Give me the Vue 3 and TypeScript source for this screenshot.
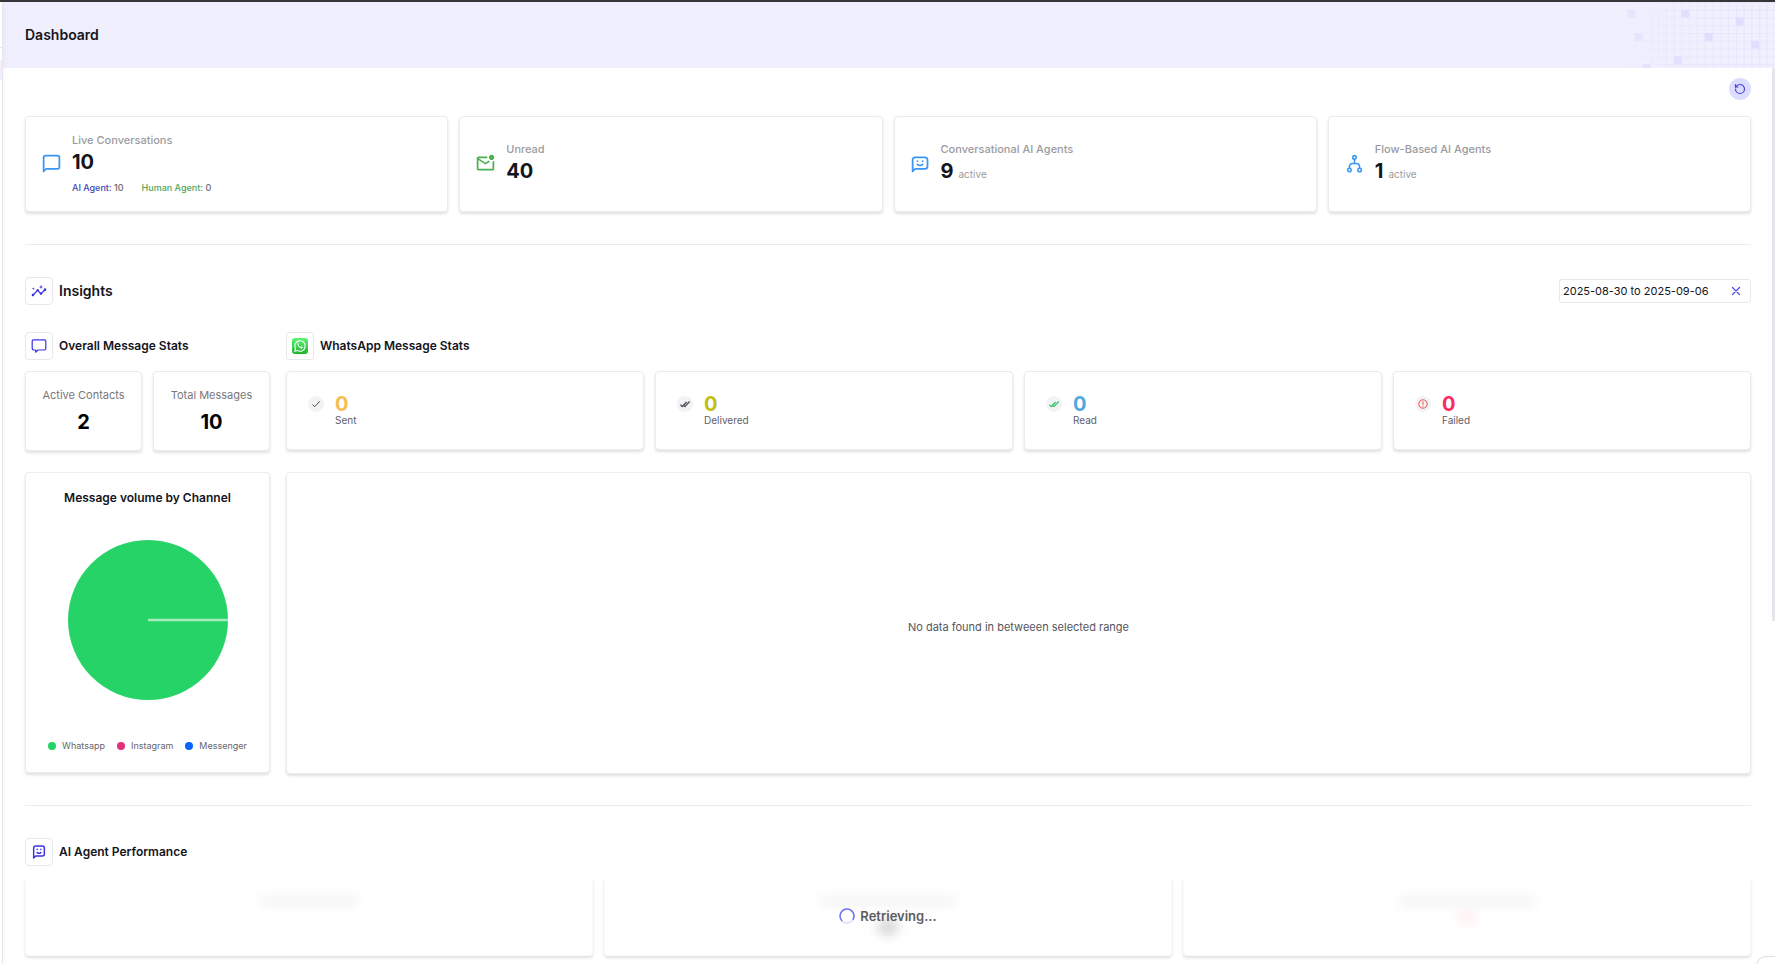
<script setup lang="ts">
import { ref } from 'vue'

interface Summary {
  label: string
  value: number
  icon: 'chat' | 'mail' | 'bot' | 'flow'
  suffix?: string
  split?: { ai: number; human: number }
}

const summaries: Summary[] = [
  { label: 'Live Conversations', value: 10, icon: 'chat', split: { ai: 10, human: 0 } },
  { label: 'Unread', value: 40, icon: 'mail' },
  { label: 'Conversational AI Agents', value: 9, icon: 'bot', suffix: 'active' },
  { label: 'Flow-Based AI Agents', value: 1, icon: 'flow', suffix: 'active' },
]

const totals = [
  { label: 'Active Contacts', value: 2 },
  { label: 'Total Messages', value: 10 },
]

const delivery = [
  { key: 'sent', label: 'Sent', value: 0 },
  { key: 'delivered', label: 'Delivered', value: 0 },
  { key: 'read', label: 'Read', value: 0 },
  { key: 'failed', label: 'Failed', value: 0 },
]

const channels = [
  { key: 'whatsapp', label: 'Whatsapp' },
  { key: 'instagram', label: 'Instagram' },
  { key: 'messenger', label: 'Messenger' },
]

// Column and row of each filled cell in the header grid
const cells = [[1, 1], [8, 1], [15, 2], [2, 4], [11, 4], [17, 5], [7, 7], [3, 8]]

const range = ref('2025-08-30 to 2025-09-06')
</script>

<template>
  <div class="app">
    <aside class="rail"><span class="rail-line"></span><span class="rail-active"></span></aside>
    <div class="shell">
      <header class="header">
        <h1>Dashboard</h1>
        <svg class="grid-art" viewBox="0 0 160 68" aria-hidden="true">
          <defs>
            <pattern id="cells" width="8" height="8" patternUnits="userSpaceOnUse">
              <path d="M8 0H0V8" fill="none" stroke="#dfddfc" stroke-width="1" />
            </pattern>
            <linearGradient id="fade">
              <stop offset="0" stop-color="#fff" stop-opacity="0" />
              <stop offset="0.5" stop-color="#fff" />
            </linearGradient>
            <linearGradient id="fadeCells">
              <stop offset="0" stop-color="#fff" stop-opacity="0.5" />
              <stop offset="0.5" stop-color="#fff" />
            </linearGradient>
            <mask id="m1"><rect width="160" height="68" fill="url(#fade)" /></mask>
            <mask id="m2"><rect width="160" height="68" fill="url(#fadeCells)" /></mask>
          </defs>
          <rect width="160" height="68" fill="url(#cells)" mask="url(#m1)" />
          <g mask="url(#m2)" fill="#e0defe">
            <rect v-for="c in cells" :key="c.join()" :x="c[0] * 8" :y="c[1] * 8" width="8" height="8" />
          </g>
        </svg>
      </header>

      <main class="content">
        <div class="toolbar">
          <button class="refresh" type="button" aria-label="Refresh">
            <svg viewBox="0 0 24 24" fill="none" stroke="currentColor" stroke-width="2.4" stroke-linecap="round" stroke-linejoin="round">
              <path d="M3 12a9 9 0 1 0 9-9 9.75 9.75 0 0 0-6.74 2.74L3 8" />
              <path d="M3 3v5h5" />
            </svg>
          </button>
        </div>

        <section class="summary">
          <article v-for="s in summaries" :key="s.label" class="card summary-card">
            <svg v-if="s.icon === 'chat'" class="sum-icon blue" viewBox="0 0 24 24" fill="none" stroke="currentColor" stroke-width="2" stroke-linejoin="round">
              <path d="M3 21V5a2 2 0 0 1 2-2h14a2 2 0 0 1 2 2v11a2 2 0 0 1-2 2H6z" />
            </svg>
            <svg v-else-if="s.icon === 'mail'" class="sum-icon green" viewBox="0 0 24 24" fill="currentColor">
              <path d="M22 8.98V18c0 1.1-.9 2-2 2H4c-1.1 0-2-.9-2-2V6c0-1.1.9-2 2-2h10.1c-.06.32-.1.66-.1 1s.04.68.1 1H4l8 5 3.67-2.29c.47.43 1.02.76 1.63.98L12 13 4 8v10h16V9.9c.74-.15 1.42-.48 2-.92M16 5c0 1.66 1.34 3 3 3s3-1.34 3-3-1.34-3-3-3-3 1.34-3 3" />
            </svg>
            <svg v-else-if="s.icon === 'bot'" class="sum-icon blue" viewBox="0 0 24 24" fill="none" stroke="currentColor" stroke-width="2" stroke-linecap="round" stroke-linejoin="round">
              <path d="M3 21V8a3 3 0 0 1 3-3h11a3 3 0 0 1 3 3v7a3 3 0 0 1-3 3H6z" />
              <path d="M8.5 9.2v.2M14.5 9.2v.2M8.5 13c1.6 1.500 4.400 1.500 6 0" />
            </svg>
            <svg v-else class="sum-icon blue" viewBox="0 0 24 24" fill="none" stroke="currentColor" stroke-width="1.8">
              <circle cx="12" cy="5" r="2" />
              <circle cx="6.200" cy="19.500" r="2" />
              <circle cx="17.800" cy="19.500" r="2" />
              <path d="M12 7v5M6.200 17.500V16c0-2.600 1.200-4 3.800-4h4c2.600 0 3.800 1.400 3.800 4v1.500" />
            </svg>
            <div>
              <h2 class="sum-label">{{ s.label }}</h2>
              <p class="sum-value">
                <strong>{{ s.value }}</strong>
                <small v-if="s.suffix">{{ s.suffix }}</small>
              </p>
              <p v-if="s.split" class="sum-split">
                <span><b class="ai">AI Agent:</b> {{ s.split.ai }}</span>
                <span><b class="human">Human Agent:</b> {{ s.split.human }}</span>
              </p>
            </div>
          </article>
        </section>

        <hr />

        <div class="section-head">
          <div class="heading">
            <span class="icon-box">
              <svg class="brand" viewBox="0 0 24 24" fill="currentColor">
                <path d="M21 8c-1.45 0-2.26 1.44-1.93 2.51l-3.55 3.56c-.3-.09-.74-.09-1.04 0l-2.55-2.55C12.27 10.45 11.46 9 10 9c-1.450 0-2.270 1.440-1.930 2.520l-4.560 4.550C2.440 15.740 1 16.550 1 18c0 1.100.9 2 2 2 1.450 0 2.260-1.440 1.930-2.510l4.550-4.560c.3.090.740.090 1.040 0l2.550 2.550C12.730 16.550 13.540 18 15 18c1.450 0 2.270-1.440 1.930-2.520l3.560-3.550c1.070.330 2.510-.480 2.510-1.930 0-1.100-.9-2-2-2z" />
                <path d="M15 9l.94-2.070L18 6l-2.060-.930L15 3l-.920 2.070L12 6l2.080.930zM3.500 11L4 9l2-.500L4 8l-.500-2L3 8l-2 .500L3 9z" />
              </svg>
            </span>
            <h2 class="big">Insights</h2>
          </div>
          <div class="date-range">
            <input v-model="range" type="text" aria-label="Date range" />
            <button type="button" aria-label="Clear date range" @click="range = ''">
              <svg viewBox="0 0 10 10" fill="none" stroke="currentColor" stroke-width="1.2" stroke-linecap="round">
                <path d="M1.500 1.500l7 7M8.500 1.500l-7 7" />
              </svg>
            </button>
          </div>
        </div>

        <div class="insights">
          <section class="overall">
            <div class="heading">
              <span class="icon-box">
                <svg class="brand" viewBox="0 0 16 16" fill="none" stroke="currentColor" stroke-width="1.200" stroke-linejoin="round">
                  <path d="M2.600 1.800h10.800A1.400 1.400 0 0 1 14.800 3.200v7.400A1.400 1.400 0 0 1 13.400 12H7L4.600 14.200V12h-2a1.400 1.400 0 0 1-1.400-1.400V3.200A1.400 1.400 0 0 1 2.600 1.800z" />
                </svg>
              </span>
              <h3>Overall Message Stats</h3>
            </div>
            <div class="totals">
              <article v-for="t in totals" :key="t.label" class="card total-card">
                <h4>{{ t.label }}</h4>
                <strong>{{ t.value }}</strong>
              </article>
            </div>
            <article class="card volume">
              <h3>Message volume by Channel</h3>
              <svg class="pie" viewBox="0 0 160 160" role="img" aria-label="Whatsapp 100%">
                <circle cx="80" cy="80" r="80" fill="#26d367" />
                <path d="M80 80h80" stroke="#a2ecbd" stroke-width="2.500" />
              </svg>
              <ul class="legend">
                <li v-for="c in channels" :key="c.key"><i :class="c.key"></i>{{ c.label }}</li>
              </ul>
            </article>
          </section>

          <section class="whatsapp-stats">
            <div class="heading">
              <span class="icon-box">
                <svg viewBox="0 0 16 16">
                  <defs>
                    <linearGradient id="wa" x1="0" y1="0" x2="0" y2="1">
                      <stop offset="0" stop-color="#5bf675" />
                      <stop offset="1" stop-color="#1fb32a" />
                    </linearGradient>
                  </defs>
                  <rect width="16" height="16" rx="3" fill="url(#wa)" />
                  <path d="M2.700 13.300l.8-2.700a5.200 5.200 0 1 1 2 1.950z" fill="none" stroke="#fff" stroke-width="1.100" stroke-linejoin="round" />
                  <path d="M6.100 5.200c-.5.300-.7.900-.5 1.600.4 1.600 2 3.100 3.600 3.600.8.200 1.500-.1 1.700-.8l.1-.6-1.600-.8-.8.800c-1-.400-1.700-1.100-2.100-2l.6-.7-.6-1.300z" fill="#fff" />
                </svg>
              </span>
              <h3>WhatsApp Message Stats</h3>
            </div>
            <div class="delivery">
              <article v-for="d in delivery" :key="d.key" class="card delivery-card" :class="d.key">
                <span class="badge">
                  <svg viewBox="0 0 10 10" fill="none" stroke="currentColor" stroke-width="1">
                    <path v-if="d.key === 'sent'" d="M1.500 5.500l2.200 2.200L8.800 2.300" />
                    <template v-else-if="d.key === 'failed'">
                      <circle cx="5" cy="5" r="4.200" />
                      <path d="M5 2.500v3.200M5 6.600v1" />
                    </template>
                    <path v-else d="M.4 5.800l1.800 1.800L6.600 3M3 5.800l1.900 1.800L9.600 2.400" stroke-width="1.300" />
                  </svg>
                </span>
                <div>
                  <strong>{{ d.value }}</strong>
                  <h4>{{ d.label }}</h4>
                </div>
              </article>
            </div>
            <article class="card empty">
              <p>No data found in betweeen selected range</p>
            </article>
          </section>
        </div>

        <hr class="tight" />

        <div class="heading performance-head">
          <span class="icon-box">
            <svg class="brand" viewBox="0 0 24 24" fill="none" stroke="currentColor" stroke-width="2.200" stroke-linecap="round" stroke-linejoin="round">
              <path d="M4 21V6a3 3 0 0 1 3-3h10a3 3 0 0 1 3 3v9a3 3 0 0 1-3 3H7z" />
              <path d="M9.200 8v.2M14.800 8v.2M9.200 12.600c1.500 1.500 4.100 1.500 5.600 0" />
            </svg>
          </span>
          <h3>AI Agent Performance</h3>
        </div>
        <section class="performance" aria-busy="true">
          <article class="card pending"><i class="line"></i></article>
          <article class="card pending"><i class="line wide"></i><i class="dot dark"></i></article>
          <article class="card pending"><i class="line wide"></i><i class="dot red"></i></article>
          <div class="loading" role="status">
            <svg viewBox="0 0 16 16" fill="none" stroke-width="1.500">
              <circle cx="8" cy="8" r="7" stroke="#dcdcfd" />
              <path d="M3.100 13A7 7 0 1 1 13.900 11.800" stroke="#7170f0" />
            </svg>
            Retrieving...
          </div>
        </section>
      </main>
      <span class="scroll-thumb"></span>
      <button class="corner" type="button" aria-label="Help"></button>
    </div>
  </div>
</template>

<style>
body {
  background: #fff;
}
</style>

<style scoped>
* {
  box-sizing: border-box;
}
h1,
h2,
h3,
h4,
p,
ul {
  margin: 0;
  padding: 0;
}
svg {
  display: block;
}
button {
  padding: 0;
  border: 0;
  background: none;
  cursor: pointer;
}
.app {
  display: flex;
  height: 100vh;
  overflow: hidden;
  border-top: 2px solid #38363a;
  font-family: Inter, sans-serif;
  color: #14141c;
}
.rail {
  position: relative;
  z-index: 1;
  flex: none;
  width: 3px;
  border-right: 1px solid #e6e6e9;
  box-shadow: 1px 0 5px rgba(0, 0, 0, 0.05);
}
.rail-line {
  display: block;
  height: 46px;
  border-bottom: 1px solid #e6e6e9;
}
.rail-active {
  display: block;
  height: 20px;
  margin-top: 12px;
  background: #f6eafe;
}
.shell {
  position: relative;
  flex: 1;
  min-width: 0;
}
.header {
  position: relative;
  display: flex;
  align-items: center;
  height: 66px;
  padding: 0 22px 1px;
  background: #f0effe;
}
.header h1 {
  font-size: 14px;
  line-height: 20px;
  font-weight: 600;
}
.grid-art {
  position: absolute;
  top: 0;
  right: 0;
  width: 156px;
  height: 66px;
}
.content {
  padding: 10px 24px 0 22px;
}
.toolbar {
  display: flex;
  justify-content: flex-end;
}
.refresh {
  display: grid;
  place-items: center;
  width: 22px;
  height: 22px;
  border-radius: 50%;
  background: #dcdcfe;
  color: #4b3fe0;
}
.refresh svg {
  width: 12px;
  height: 12px;
}
.card {
  border: 1px solid #ececee;
  border-radius: 4px;
  background: #fff;
  box-shadow: 0 2px 3px rgba(0, 0, 0, 0.12);
}
.summary {
  display: grid;
  grid-template-columns: repeat(4, 1fr);
  gap: 11px;
  margin-top: 16px;
}
.summary-card {
  display: flex;
  align-items: center;
  gap: 10px;
  height: 96px;
  padding: 0 15px 2px;
}
.sum-icon {
  width: 21px;
  height: 21px;
}
.blue {
  color: #3b96f3;
}
.green {
  color: #4caf50;
}
.sum-label {
  font-size: 11px;
  line-height: 16px;
  font-weight: 500;
  color: #9b9b9f;
}
.sum-value {
  display: flex;
  align-items: baseline;
  gap: 5px;
  line-height: 28px;
}
.sum-value strong {
  font-size: 20px;
  font-weight: 700;
}
.sum-value small {
  font-size: 10px;
  line-height: 12px;
  color: #9b9b9f;
}
.sum-split {
  display: flex;
  gap: 18px;
  margin-top: 5px;
  font-size: 9px;
  line-height: 14px;
  font-weight: 500;
  color: #66666c;
}
.sum-split b {
  font-weight: 500;
}
.sum-split .ai {
  color: #3f46b0;
}
.sum-split .human {
  color: #4fa657;
}
hr {
  height: 1px;
  margin: 32px 0;
  border: 0;
  background: #ebebed;
}
hr.tight {
  margin-top: 31px;
}
.section-head {
  display: flex;
  align-items: center;
  justify-content: space-between;
}
.heading {
  display: flex;
  align-items: center;
  gap: 6px;
}
.heading h2,
.heading h3,
.volume h3 {
  font-size: 12px;
  line-height: 20px;
  font-weight: 600;
}
.heading .big {
  font-size: 14px;
}
.icon-box {
  display: grid;
  place-items: center;
  width: 28px;
  height: 28px;
  border: 1px solid #e8e8ea;
  border-radius: 4px;
}
.icon-box svg {
  width: 16px;
  height: 16px;
}
.brand {
  color: #3a33e6;
}
.date-range {
  display: flex;
  align-items: center;
  width: 192px;
  height: 24px;
  padding: 0 9px 1px 3px;
  border: 1px solid #e8e8ea;
  border-radius: 3px;
}
.date-range input {
  flex: 1;
  min-width: 0;
  padding: 0;
  border: 0;
  outline: 0;
  font-family: inherit;
  font-size: 11px;
  color: #14141c;
}
.date-range svg {
  width: 10px;
  height: 10px;
  color: #4b45e0;
}
.insights {
  display: grid;
  grid-template-columns: 245px 1fr;
  gap: 16px;
  margin-top: 27px;
}
.totals {
  display: grid;
  grid-template-columns: repeat(2, 1fr);
  gap: 11px;
  margin-top: 11px;
}
.total-card {
  display: flex;
  flex-direction: column;
  align-items: center;
  justify-content: center;
  gap: 7px;
  height: 80px;
  padding-bottom: 1px;
}
.total-card h4 {
  font-size: 11px;
  line-height: 16px;
  font-weight: 400;
  color: #77777c;
}
.total-card strong {
  font-size: 20px;
  line-height: 24px;
  font-weight: 700;
  color: #000;
}
.volume {
  display: flex;
  flex-direction: column;
  align-items: center;
  height: 301px;
  margin-top: 21px;
  padding-top: 15px;
}
.pie {
  width: 160px;
  height: 160px;
  margin-top: 32px;
}
.legend {
  display: flex;
  gap: 12px;
  margin-top: 38px;
  list-style: none;
  font-size: 9px;
  line-height: 16px;
  color: #66666c;
}
.legend li {
  display: flex;
  align-items: center;
  gap: 6px;
}
.legend i {
  width: 8px;
  height: 8px;
  border-radius: 50%;
}
.legend .whatsapp {
  background: #26d367;
}
.legend .instagram {
  background: #e1307c;
}
.legend .messenger {
  background: #0a63ff;
}
.delivery {
  display: grid;
  grid-template-columns: repeat(4, 1fr);
  gap: 11px;
  margin-top: 11px;
}
.delivery-card {
  display: flex;
  gap: 11px;
  height: 79px;
  padding: 21px 21px 0;
}
.badge {
  display: grid;
  place-items: center;
  width: 16px;
  height: 16px;
  margin-top: 3px;
  border-radius: 50%;
  background: #f2f3f4;
  color: #4a4a50;
}
.badge svg {
  width: 10px;
  height: 10px;
}
.delivery-card strong {
  display: block;
  font-size: 20px;
  line-height: 22px;
  font-weight: 700;
}
.delivery-card h4 {
  font-size: 10px;
  line-height: 11px;
  font-weight: 400;
  color: #5f6068;
}
.sent strong {
  color: #f6bd55;
}
.delivered strong {
  color: #bdc10f;
}
.read strong {
  color: #4fa9dd;
}
.read .badge {
  color: #34c368;
}
.failed strong {
  color: #fb2a66;
}
.failed .badge {
  color: #f04848;
}
.empty {
  display: grid;
  place-items: center;
  height: 302px;
  margin-top: 22px;
  padding-top: 8px;
  font-size: 11px;
  color: #55555b;
}
.performance-head {
  margin-bottom: 10px;
}
.performance {
  position: relative;
  display: grid;
  grid-template-columns: repeat(3, 1fr);
  gap: 11px;
}
.pending {
  display: flex;
  flex-direction: column;
  align-items: center;
  gap: 10px;
  height: 80px;
  padding-top: 18px;
  border-color: #fbfbfb;
  clip-path: inset(4px -4px -6px -4px);
}
.line {
  width: 98px;
  height: 12px;
  background: #f6f6f7;
  filter: blur(5px);
}
.line.wide {
  width: 136px;
}
.dot {
  width: 18px;
  height: 16px;
  border-radius: 50%;
  filter: blur(6px);
}
.dark {
  width: 22px;
  margin-top: 2px;
  background: #d3d3d5;
}
.red {
  margin-top: -8px;
  background: #ffeeee;
}
.loading {
  position: absolute;
  inset: 0;
  display: flex;
  align-items: center;
  justify-content: center;
  gap: 5px;
  font-size: 13px;
  line-height: 20px;
  font-weight: 600;
  color: #5c5c60;
}
.loading svg {
  width: 16px;
  height: 16px;
}
.scroll-thumb {
  position: absolute;
  top: 66px;
  right: 0;
  width: 3px;
  height: 57.5%;
  background: #e3e6ea;
}
.corner {
  position: absolute;
  right: -21px;
  bottom: -32px;
  width: 40px;
  height: 40px;
  border: 1px solid #dcdcdf;
  border-radius: 10px;
  background: #fff;
}
</style>
